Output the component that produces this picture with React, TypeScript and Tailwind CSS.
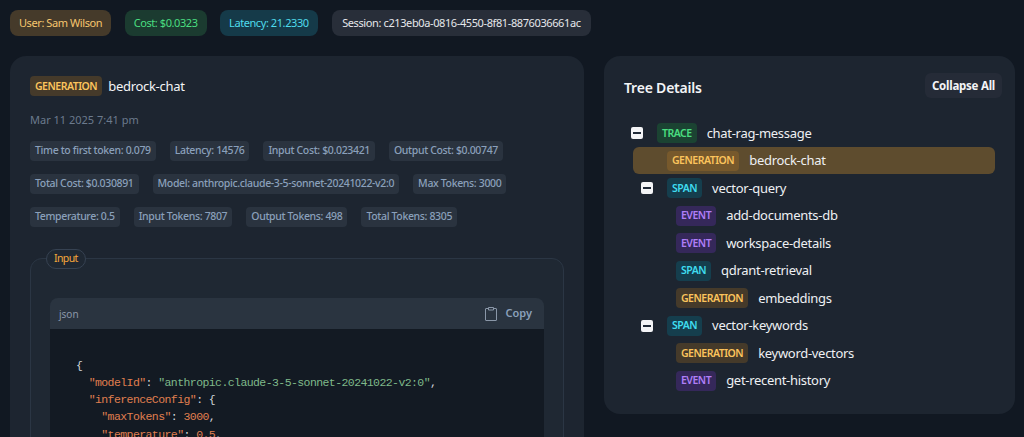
const badgeStyles = {
  TRACE: "bg-[#1b4332] text-[#4ade80]",
  GENERATION: "bg-[#453a2a] text-[#fcc45c]",
  SPAN: "bg-[#153e4d] text-[#3fdcf0]",
  EVENT: "bg-[#35285a] text-[#b07ef8]",
};

type Kind = keyof typeof badgeStyles;

const stats = [
  ["Time to first token: 0.079", "Latency: 14576", "Input Cost: $0.023421", "Output Cost: $0.00747"],
  ["Total Cost: $0.030891", "Model: anthropic.claude-3-5-sonnet-20241022-v2:0", "Max Tokens: 3000"],
  ["Temperature: 0.5", "Input Tokens: 7807", "Output Tokens: 498", "Total Tokens: 8305"],
];

const tree: { kind: Kind; name: string; depth: number; toggle?: boolean; active?: boolean }[] = [
  { kind: "TRACE", name: "chat-rag-message", depth: 0, toggle: true },
  { kind: "GENERATION", name: "bedrock-chat", depth: 1, active: true },
  { kind: "SPAN", name: "vector-query", depth: 1, toggle: true },
  { kind: "EVENT", name: "add-documents-db", depth: 2 },
  { kind: "EVENT", name: "workspace-details", depth: 2 },
  { kind: "SPAN", name: "qdrant-retrieval", depth: 2 },
  { kind: "GENERATION", name: "embeddings", depth: 2 },
  { kind: "SPAN", name: "vector-keywords", depth: 1, toggle: true },
  { kind: "GENERATION", name: "keyword-vectors", depth: 2 },
  { kind: "EVENT", name: "get-recent-history", depth: 2 },
];

function Badge({ kind, tone }: { kind: Kind; tone?: string }) {
  return (
    <span
      className={`flex h-5 shrink-0 items-center rounded-[4px] px-[5px] pt-px text-[10.5px] font-semibold tracking-[-0.5px] ${
        tone ?? badgeStyles[kind]
      }`}
    >
      {kind}
    </span>
  );
}

function TreeRow({ row }: { row: (typeof tree)[number] }) {
  const indent = row.depth === 0 ? "pl-[27px]" : row.depth === 1 ? "pl-[37px]" : "pl-[72px]";
  return (
    <div className={`relative flex h-[27.5px] items-center ${indent}`}>
      {row.active && (
        <div className="absolute top-0 right-5 left-[29px] h-[27px] rounded-md bg-[#5e4c2e]" />
      )}
      {row.toggle && (
        <span className="relative mr-[14px] flex size-[12px] shrink-0 items-center justify-center rounded-[2px] bg-[#f3f4f6]">
          <span className="h-[2px] w-[8px] bg-[#1f2937]" />
        </span>
      )}
      <div className={`relative flex items-center ${row.active ? "ml-[26px]" : ""}`}>
        <Badge
          kind={row.kind}
          tone={row.active ? "bg-[#77592c] text-[#fcc45c]" : undefined}
        />
        <span className="ml-[10px] text-[13px] tracking-[-0.3px] text-[#eef0f3]">
          {row.name}
        </span>
      </div>
    </div>
  );
}

function Key({ children }: { children: string }) {
  return <span className="text-[#e07f4f]">{children}</span>;
}

function ClipboardIcon() {
  return (
    <svg width="12" height="15" viewBox="0 0 12 15" fill="none" className="text-[#8a97a8]">
      <path d="M3.5 2.5H1a.5.5 0 0 0-.5.5v11a.5.5 0 0 0 .5.5h10a.5.5 0 0 0 .5-.5V3a.5.5 0 0 0-.5-.5H8.5" stroke="currentColor" />
      <path d="M3.5 1.5h5v2.5h-5z" stroke="currentColor" />
    </svg>
  );
}

export default function App() {
  return (
    <div className="h-[437px] overflow-hidden bg-[#111822] font-['Noto_Sans',sans-serif] text-white">
      <div className="flex items-center gap-[13.5px] pt-[10px] pl-[10px] text-[11px] tracking-[-0.42px]">
        <span className="flex h-[26px] items-center rounded-lg bg-[#453a2a] px-[9px] pt-px text-[#f6c66e]">User: Sam Wilson</span>
        <span className="flex h-[26px] items-center rounded-lg bg-[#1b3b30] px-[9px] pt-px text-[#4ade80]">Cost: $0.0323</span>
        <span className="flex h-[26px] items-center rounded-lg bg-[#153a49] px-[9px] pt-px text-[#4fdcec]">Latency: 21.2330</span>
        <span className="ml-px flex h-[26px] items-center rounded-lg bg-[#282e39] px-[10px] pt-px tracking-[-0.39px] text-[#e5e7eb]">
          Session: c213eb0a-0816-4550-8f81-8876036661ac
        </span>
      </div>

      <div className="mt-5 flex items-start pr-[9px] pl-[10px]">
        <section className="w-[574px] shrink-0 rounded-2xl bg-[#1d2530] px-5 pt-5 pb-6">
          <div className="flex items-center">
            <Badge kind="GENERATION" />
            <span className="ml-[6px] pt-px text-[13px] tracking-[-0.3px] text-[#f3f4f6]">bedrock-chat</span>
          </div>
          <div className="mt-[13px] text-[11px] leading-[20px] text-[#6b7a8d]">Mar 11 2025 7:41 pm</div>

          <div className="mt-[11px] flex flex-col gap-[13px]">
            {stats.map((line) => (
              <div key={line[0]} className="flex gap-[14px]">
                {line.map((item) => (
                  <span
                    key={item}
                    className="flex h-5 items-center rounded-[4px] bg-[#2a333f] px-[5px] pt-px text-[10.5px] font-medium tracking-[-0.35px] text-[#8aa0bb]"
                  >
                    {item}
                  </span>
                ))}
              </div>
            ))}
          </div>

          <fieldset className="mt-[22px] rounded-xl border border-[#2b3644] bg-[#1f2833] px-[19px] pt-[29px] pb-6">
            <legend className="-ml-[4px] flex h-5 items-center rounded-full border border-[#364252] bg-[#1f2833] px-[7px] text-[10.5px] tracking-[-0.6px] text-[#f7a93b]">
              Input
            </legend>
            <div className="overflow-hidden rounded-lg">
              <div className="flex h-[31px] items-center justify-between bg-[#2a3440] pr-3 pl-[9px]">
                <span className="pt-[3px] text-[10px] text-[#8a97a8]">json</span>
                <span className="flex items-center gap-[9px] pt-px text-[11px] font-semibold text-[#8aa0bb]">
                  <ClipboardIcon />
                  Copy
                </span>
              </div>
              <div className="flex h-[200px] flex-col bg-[#131a23] px-[26px] pt-[28px] font-['Liberation_Mono',monospace] text-[11.5px] leading-[17.3px] tracking-[-0.58px] whitespace-pre text-[#d1d5db]">
                <div>{"{"}</div>
                <div>
                  {"  "}
                  <Key>{'"modelId"'}</Key>
                  {": "}
                  <span className="text-[#7fb98a]">"anthropic.claude-3-5-sonnet-20241022-v2:0"</span>
                  {","}
                </div>
                <div>
                  {"  "}
                  <Key>{'"inferenceConfig"'}</Key>
                  {": {"}
                </div>
                <div>
                  {"    "}
                  <Key>{'"maxTokens"'}</Key>
                  {": "}
                  <Key>3000</Key>
                  {","}
                </div>
                <div>
                  {"    "}
                  <Key>{'"temperature"'}</Key>
                  {": "}
                  <Key>0.5</Key>
                  {","}
                </div>
              </div>
            </div>
          </fieldset>
        </section>

        <section className="ml-5 h-[358px] flex-1 rounded-2xl bg-[#1d2530] pt-[17px]">
          <div className="flex items-center justify-between pr-[13px] pl-5">
            <h2 className="pt-1 text-[14px] font-semibold tracking-[-0.2px] text-[#f3f4f6]">Tree Details</h2>
            <button type="button" className="h-[25px] rounded-md bg-[#252b37] px-[7px] text-[11.5px] font-bold tracking-[-0.25px] text-[#f3f4f6]">
              Collapse All
            </button>
          </div>
          <div className="mt-[21.5px]">
            {tree.map((row) => (
              <TreeRow key={row.name} row={row} />
            ))}
          </div>
        </section>
      </div>
    </div>
  );
}
